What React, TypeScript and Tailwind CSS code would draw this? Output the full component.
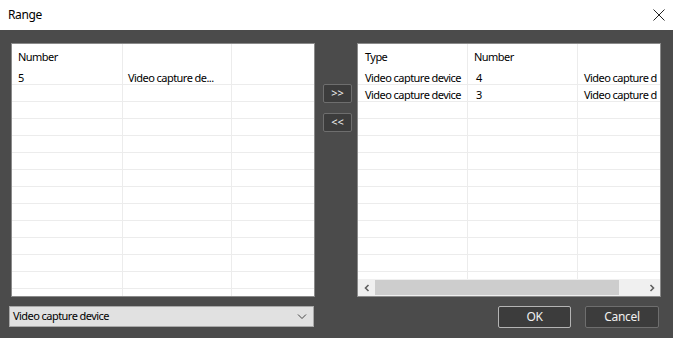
import React from "react";

const font = { fontFamily: '"Noto Sans", "Liberation Sans", sans-serif' };

function LeftTable() {
  const rows = Array.from({ length: 13 });
  return (
    <div className="w-[304px] h-[254px] bg-white border border-[#8a8a8a] overflow-hidden flex flex-col">
      <div className="flex h-[24px] shrink-0">
        <div className="w-[111px] border-r border-[#ececec] pl-[6px] pt-[5px] leading-[15px]">Number</div>
        <div className="w-[109px] border-r border-[#ececec]"></div>
        <div className="flex-1"></div>
      </div>
      {rows.map((_, i) => (
        <div key={i} className="flex h-[17px] shrink-0 border-b border-[#ececec]">
          <div className="w-[111px] border-r border-[#ececec] pl-[6px] leading-[15px] pt-[2px]">{i === 0 ? "5" : ""}</div>
          <div className="w-[109px] border-r border-[#ececec] pl-[5px] leading-[15px] pt-[2px] whitespace-nowrap">
            {i === 0 ? "Video capture de..." : ""}
          </div>
          <div className="flex-1"></div>
        </div>
      ))}
      <div className="flex flex-1">
        <div className="w-[111px] border-r border-[#ececec]"></div>
        <div className="w-[109px] border-r border-[#ececec]"></div>
        <div className="flex-1"></div>
      </div>
    </div>
  );
}

function RightTable() {
  const rows = Array.from({ length: 12 });
  const data = ["4", "3"];
  return (
    <div className="w-[304px] h-[254px] bg-white border border-[#8a8a8a] overflow-hidden flex flex-col">
      <div className="flex flex-col flex-1 overflow-hidden">
        <div className="flex h-[24px] shrink-0">
          <div className="w-[110px] shrink-0 border-r border-[#ececec] pl-[7px] pt-[5px] leading-[15px]">Type</div>
          <div className="w-[110px] shrink-0 border-r border-[#ececec] pl-[6px] pt-[5px] leading-[15px]">Number</div>
          <div className="flex-1"></div>
        </div>
        {rows.map((_, i) => (
          <div key={i} className="flex h-[17px] shrink-0 border-b border-[#ececec]">
            <div className="w-[110px] shrink-0 border-r border-[#ececec] pl-[7px] leading-[15px] pt-[2px] whitespace-nowrap overflow-hidden">
              {i < 2 ? "Video capture device" : ""}
            </div>
            <div className="w-[110px] shrink-0 border-r border-[#ececec] pl-[8px] leading-[15px] pt-[2px]">{i < 2 ? data[i] : ""}</div>
            <div className="flex-1 pl-[6px] leading-[15px] pt-[2px] whitespace-nowrap overflow-hidden">
              {i < 2 ? "Video capture d" : ""}
            </div>
          </div>
        ))}
        <div className="flex flex-1">
          <div className="w-[110px] shrink-0 border-r border-[#ececec]"></div>
          <div className="w-[110px] shrink-0 border-r border-[#ececec]"></div>
          <div className="flex-1"></div>
        </div>
      </div>
      <div className="h-[17px] shrink-0 bg-[#f0f0f0] flex items-center">
        <div className="w-[17px] h-full flex items-center justify-center">
          <svg width="8" height="8" viewBox="0 0 8 8">
            <path d="M5.5 1 L2.5 4 L5.5 7" stroke="#606060" strokeWidth="1.6" fill="none" />
          </svg>
        </div>
        <div className="w-[244px] h-[15px] bg-[#cdcdcd]"></div>
        <div className="flex-1"></div>
        <div className="w-[17px] h-full flex items-center justify-center">
          <svg width="8" height="8" viewBox="0 0 8 8">
            <path d="M2.5 1 L5.5 4 L2.5 7" stroke="#606060" strokeWidth="1.6" fill="none" />
          </svg>
        </div>
      </div>
    </div>
  );
}

export default function App() {
  return (
    <div className="w-[673px] h-[338px] flex flex-col text-[11px] tracking-[-0.55px] text-black" style={font}>
      <div className="h-[30px] bg-white flex items-center justify-between pl-[8px] pr-[7px]">
        <span className="text-[12px] tracking-[-0.4px]">Range</span>
        <svg width="14" height="14" viewBox="0 0 14 14">
          <path d="M1.5 1.5 L12.5 12.5 M12.5 1.5 L1.5 12.5" stroke="#222" strokeWidth="1" fill="none" />
        </svg>
      </div>
      <div className="flex-1 bg-[#4b4b4b] pt-[13px] pl-[11px] flex">
        <div className="flex flex-col w-[304px]">
          <LeftTable />
          <div className="mt-[9px] -ml-[2px] w-[305px] h-[21px] bg-[#e1e1e1] border border-[#a8a8a8] flex items-center justify-between pl-[3px] pr-[6px]">
            <span>Video capture device</span>
            <svg width="10" height="6" viewBox="0 0 10 6">
              <path d="M1 0.5 L5 4.5 L9 0.5" stroke="#444" strokeWidth="1" fill="none" />
            </svg>
          </div>
        </div>
        <div className="flex flex-col ml-[8px] pt-[41px] gap-[10px] w-[29px]">
          <div className="h-[19px] bg-[#3c3c3c] border border-[#6e6e6e] rounded-[2px] text-[#f0f0f0] flex items-center justify-center text-[11px] tracking-normal">&gt;&gt;</div>
          <div className="h-[19px] bg-[#3c3c3c] border border-[#6e6e6e] rounded-[2px] text-[#f0f0f0] flex items-center justify-center text-[11px] tracking-normal">&lt;&lt;</div>
        </div>
        <div className="flex flex-col ml-[5px]">
          <RightTable />
          <div className="mt-[9px] flex justify-end gap-[14px] pr-[2px]">
            <div className="w-[73px] h-[22px] bg-[#3c3c3c] border border-[#b4b4b4] rounded-[2px] text-[#f0f0f0] text-[12px] tracking-[-0.3px] flex items-center justify-center">OK</div>
            <div className="w-[74px] h-[22px] bg-[#3c3c3c] border border-[#6e6e6e] rounded-[2px] text-[#f0f0f0] text-[12px] tracking-[-0.3px] flex items-center justify-center">Cancel</div>
          </div>
        </div>
      </div>
    </div>
  );
}
